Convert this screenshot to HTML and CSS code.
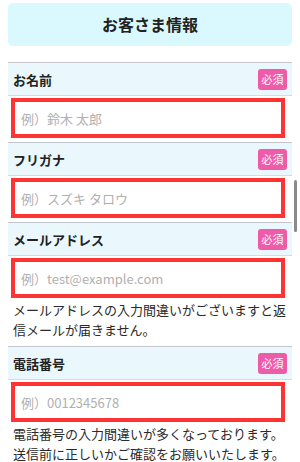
FILE: index.html
```html
<!DOCTYPE html>
<html lang="ja">
<head>
    <meta charset="UTF-8">
    <meta name="viewport" content="width=device-width, initial-scale=1.0">
    <title>お客さま情報</title>
    <link rel="stylesheet" href="styles.css">
</head>
<body>
    <div class="customer">
        <h2 class="customer_title">お客さま情報</h2>

        <div class="field">
            <div class="field_head">
                <label>お名前</label>
                <span class="required">必須</span>
            </div>
            <input type="text" class="field_input" placeholder="例）鈴木 太郎">
        </div>

        <div class="field">
            <div class="field_head">
                <label>フリガナ</label>
                <span class="required">必須</span>
            </div>
            <input type="text" class="field_input" placeholder="例）スズキ タロウ">
        </div>

        <div class="field">
            <div class="field_head">
                <label>メールアドレス</label>
                <span class="required">必須</span>
            </div>
            <input type="text" class="field_input" placeholder="例）test@example.com">
            <p class="field_note">メールアドレスの入力間違いがございますと返信メールが届きません。</p>
        </div>

        <div class="field">
            <div class="field_head">
                <label>電話番号</label>
                <span class="required">必須</span>
            </div>
            <input type="text" class="field_input" placeholder="例）0012345678">
            <p class="field_note">電話番号の入力間違いが多くなっております。送信前に正しいかご確認をお願いいたします。</p>
        </div>
    </div>
    <div class="scroll_thumb"></div>
</body>
</html>
```

FILE: styles.css
```css
html, body{
  margin:0;
  height:100%;
  overflow:hidden;
  background:#fff;
}
body{
  font-family:"Noto Sans CJK JP", "Noto Sans", sans-serif;
  color:#222;
}
.customer{
  padding:3px 8px 0 8px;
}
.customer_title{
  margin:0 0 16px 0;
  height:43px;
  line-height:43px;
  background:#d9f9fe;
  border-radius:5px;
  text-align:center;
  font-size:16px;
  font-weight:bold;
  color:#222;
}
.field{
  border-top:1px solid #c3c7cb;
  margin-bottom:4px;
}
.field_head{
  display:flex;
  align-items:center;
  justify-content:space-between;
  height:32px;
  padding:0 5px;
  background:#eaf8fe;
  border-bottom:1px solid #d6dbde;
}
.field_head label{
  font-size:13px;
  font-weight:bold;
  color:#222;
}
.required{
  background:#ee5ba9;
  color:#fff;
  font-size:11px;
  width:29px;
  height:21px;
  line-height:21px;
  text-align:center;
  border-radius:3px;
}
.field_input{
  display:block;
  box-sizing:border-box;
  width:274px;
  height:40px;
  margin:2px 0 0 3px;
  padding:0 6px;
  border:4px solid #ff3333;
  font-family:"Noto Sans CJK JP", "Noto Sans", sans-serif;
  font-size:13px;
  color:#222;
  outline:none;
}
.field_input::placeholder{
  color:#b0b0b0;
}
.field_note{
  margin:2px 0 6px 0;
  padding:0 5px;
  font-size:13px;
  line-height:20px;
  color:#2a2a2a;
}
.scroll_thumb{
  position:absolute;
  top:180px;
  right:3px;
  width:3px;
  height:52px;
  border-radius:2px;
  background:#8a8a8a;
}
```
